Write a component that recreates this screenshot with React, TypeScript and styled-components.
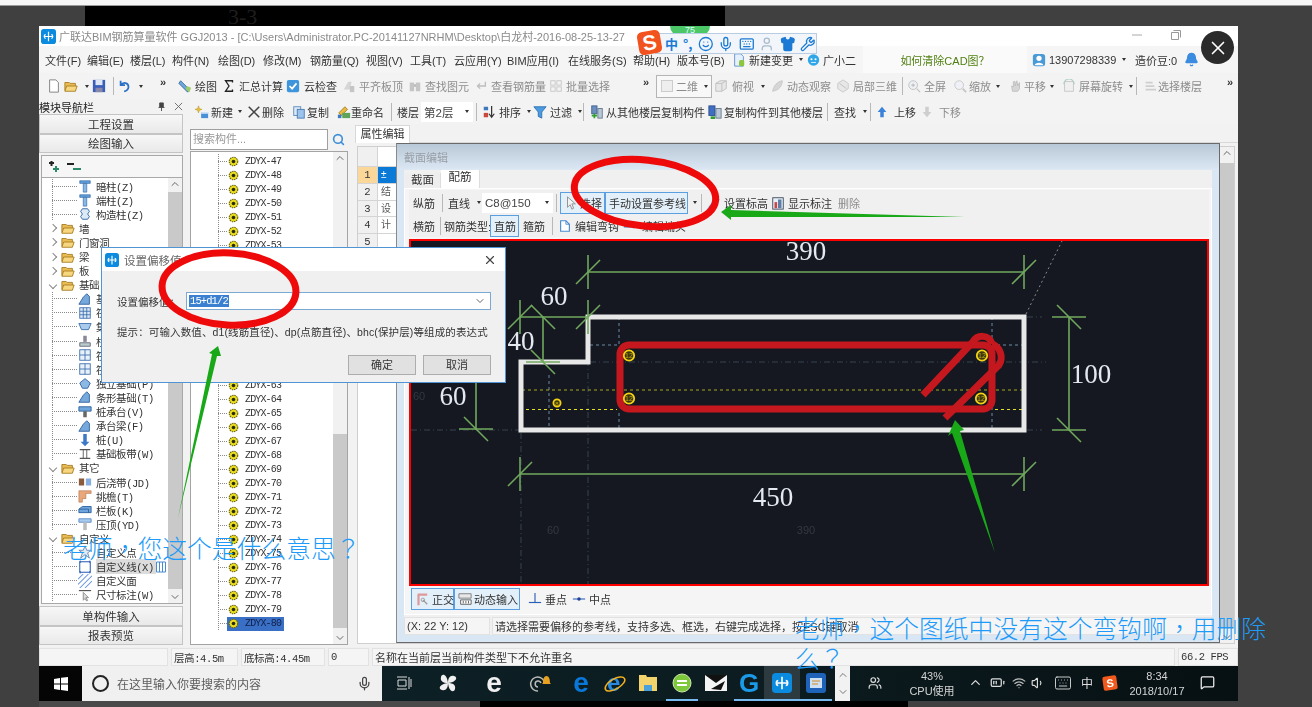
import React from "react";
import styled, { createGlobalStyle } from "styled-components";
import { Smile, Mic, Keyboard, Shirt, Wrench, User, Bell, MessageSquare, Users, ChevronUp, ChevronDown, X as XIcon, Search, Wifi, Volume1, BatteryMedium } from "lucide-react";

const GlobalStyle = createGlobalStyle`
  html, body {
    margin: 0;
    padding: 0;
    background: #404040;
  }
  * {
    box-sizing: border-box;
  }
`;

const sans = `"Liberation Sans", "Noto Sans CJK SC", sans-serif`;
const mono = `"Liberation Mono", "Noto Sans CJK SC", monospace`;

// Page frame
const Page = styled.div`
  position: relative;
  width: 1312px;
  height: 707px;
  overflow: hidden;
  background: #404040;
  display: flex;
  flex-direction: column;
  font: 11px ${sans};
  color: #333;
`;

const TopWhite = styled.div`
  height: 6px;
  background: #f6f6f6;
  border-bottom: 1px solid #9a9a9a;
`;

const TopBand = styled.div`
  height: 20px;
  padding-left: 85px;
`;

const BlackBar = styled.div`
  width: 640px;
  height: 100%;
  background: #000;
  color: #1e1e1e;
  font: 22px "Liberation Serif", serif;
  padding-left: 143px;
  line-height: 22px;
`;

const BottomBand = styled.div`
  height: 6px;
  display: flex;
`;

const BottomPart = styled.div<{ $w: number; $bg: string }>`
  width: ${({ $w }) => $w}px;
  background: ${({ $bg }) => $bg};
`;

// Main application window
const Window = styled.div`
  position: relative;
  margin-left: 39px;
  width: 1199px;
  height: 675px;
  background: #f2f2f2;
  display: flex;
  flex-direction: column;
  filter: blur(0.5px);
`;

const TitleBar = styled.div`
  height: 20px;
  background: #fff;
  display: flex;
  align-items: center;
  padding-left: 2px;
  gap: 3px;
  color: #8a8a8a;
  font-size: 11px;
  white-space: nowrap;
`;

const WinControl = styled.div<{ $x: number }>`
  position: absolute;
  left: ${({ $x }) => $x}px;
  top: 4px;
  width: 10px;
  height: 10px;
  color: #aaa;
`;

const MenuBar = styled.div`
  height: 27px;
  background: #f5f5f5;
  display: flex;
  align-items: center;
  padding-left: 6px;
  white-space: nowrap;
`;

const MenuItem = styled.div<{ $w: number }>`
  width: ${({ $w }) => $w}px;
  display: flex;
  align-items: center;
  gap: 3px;
  flex: none;
`;

const HelpTab = styled.div`
  width: 164px;
  height: 27px;
  margin: 0 5px 0 7px;
  background: #fafafa;
  color: #4f7f10;
  display: flex;
  align-items: center;
  justify-content: center;
  font-size: 11px;
  flex: none;
`;

const Caret = styled.span`
  display: inline-block;
  width: 0;
  height: 0;
  border: 2.5px solid transparent;
  border-top: 3px solid #333;
  border-bottom: 0;
  margin-left: 3px;
  flex: none;
`;

const ToolRow = styled.div<{ $h: number; $bg?: string }>`
  height: ${({ $h }) => $h}px;
  background: ${({ $bg }) => $bg || "#f3f3f3"};
  display: flex;
  align-items: center;
  white-space: nowrap;
  flex: none;
`;

const Tool = styled.div<{ $w: number; $dim?: boolean; $on?: boolean; $gap?: number }>`
  width: ${({ $w }) => $w}px;
  height: ${({ $on }) => ($on ? "22px" : "auto")};
  display: flex;
  align-items: center;
  gap: ${({ $gap }) => $gap ?? 4}px;
  flex: none;
  padding-left: ${({ $on }) => ($on ? "3px" : "2px")};
  color: ${({ $dim }) => ($dim ? "#8c8c8c" : "#333")};
  background: ${({ $on }) => ($on ? "#e3eff9" : "transparent")};
  border: ${({ $on }) => ($on ? "1.5px solid #5a9fe0" : "0")};
  svg {
    opacity: ${({ $dim }) => ($dim ? 0.5 : 1)};
    flex: none;
  }
`;

const Sep = styled.div<{ $w: number }>`
  width: ${({ $w }) => $w}px;
  height: 18px;
  flex: none;
  background: linear-gradient(#b8b8b8, #b8b8b8) center/1px 100% no-repeat;
`;

const More = styled.div<{ $w: number }>`
  width: ${({ $w }) => $w}px;
  flex: none;
  text-align: center;
  font-size: 11px;
  font-weight: bold;
  margin-top: -8px;
`;

const ModeBox = styled.div`
  width: 56px;
  height: 23px;
  flex: none;
  border: 1.5px solid #b4b4b4;
  background: #f8f8f8;
  color: #8c8c8c;
  display: flex;
  align-items: center;
  padding-left: 4px;
  gap: 3px;
  margin-left: 1px;
`;

// Work area below the toolbars
const Workspace = styled.div`
  flex: 1;
  min-height: 0;
  display: flex;
`;

const NavPanel = styled.div`
  width: 147px;
  flex: none;
  display: flex;
  flex-direction: column;
  padding-bottom: 2px;
`;

const NavTitle = styled.div`
  height: 15px;
  display: flex;
  align-items: center;
  justify-content: space-between;
  padding-right: 3px;
  font-size: 11px;
  color: #222;
`;

const NavTitleTools = styled.span`
  display: flex;
  gap: 8px;
`;

const NavButton = styled.div`
  height: 19.5px;
  flex: none;
  border: 1px solid #c4c4c4;
  background: linear-gradient(#f7f7f7, #e9e9e9);
  display: flex;
  align-items: center;
  justify-content: center;
  font-size: 11.5px;
  color: #333;
  width: 144px;
`;

const TreeBox = styled.div`
  flex: 1;
  min-height: 0;
  width: 142px;
  margin: 2px 0 2px 2px;
  border: 1px solid #a8a8a8;
  background: #fff;
  display: flex;
  flex-direction: column;
`;

const TreeTools = styled.div`
  height: 22px;
  flex: none;
  background: #f6f6f6;
  border-bottom: 1px solid #a8a8a8;
  display: flex;
  align-items: center;
  gap: 5px;
  padding-left: 3px;
`;

const TreeScrollArea = styled.div`
  flex: 1;
  min-height: 0;
  display: flex;
  overflow: hidden;
`;

const TreeBody = styled.div`
  flex: 1;
  min-width: 0;
  padding-top: 1px;
`;

const Scrollbar = styled.div<{ $w: number; $top: number; $bottom: number }>`
  width: ${({ $w }) => $w}px;
  flex: none;
  display: flex;
  flex-direction: column;
  align-items: center;
  justify-content: space-between;
  color: #666;
  background:
    linear-gradient(#c9c9c9, #c9c9c9) 0 ${({ $top }) => $top}px /
      100% calc(100% - ${({ $top, $bottom }) => $top + $bottom}px) no-repeat,
    #f1f1f1;
`;

const NavRow = styled.div<{ $leaf?: boolean }>`
  height: 14.1px;
  display: flex;
  align-items: center;
  white-space: nowrap;
  padding-left: ${({ $leaf }) => ($leaf ? "10px" : "7px")};
  font: 10.5px ${mono};
  letter-spacing: -0.45px;
  color: #333;
  svg {
    flex: none;
  }
`;

const Guide = styled.span<{ $w: number }>`
  width: ${({ $w }) => $w}px;
  height: 100%;
  flex: none;
  background:
    repeating-linear-gradient(180deg, #8a8a8a 0 1px, transparent 1px 2px) 0 0 / 1px 100% no-repeat,
    repeating-linear-gradient(90deg, #8a8a8a 0 1px, transparent 1px 2px) 0 50% / 100% 1px no-repeat;
`;

const NavLabel = styled.span<{ $sel?: boolean }>`
  margin-left: 4px;
  padding-right: 2px;
  background: ${({ $sel }) => ($sel ? "#dcdcdc" : "transparent")};
`;

const Chevron = styled.span<{ $open?: boolean }>`
  width: 6px;
  height: 6px;
  flex: none;
  border-right: 1px solid #888;
  border-bottom: 1px solid #888;
  transform: rotate(${({ $open }) => ($open ? "45deg" : "-45deg")});
  margin: 0 5px 0 1px;
`;

const CenterColumn = styled.div`
  flex: 1;
  min-width: 0;
  margin-left: 4px;
  display: flex;
  flex-direction: column;
`;

const ContentRow = styled.div`
  flex: 1;
  min-height: 0;
  display: flex;
`;

const ListPanel = styled.div`
  width: 160px;
  flex: none;
  display: flex;
  flex-direction: column;
  padding-top: 5px;
`;

const SearchRow = styled.div`
  height: 21px;
  display: flex;
  flex: none;
`;

const SearchInput = styled.div`
  width: 138px;
  background: #fff;
  border: 1.5px solid #a0a0a0;
  color: #999;
  padding-left: 2px;
  line-height: 18px;
  font-size: 11px;
`;

const SearchBtn = styled.div`
  width: 20px;
  display: flex;
  align-items: center;
  justify-content: center;
  color: #3f8fd8;
`;

const ListBox = styled.div`
  flex: 1;
  min-height: 0;
  margin: 1px 2px 2px 0;
  border: 1.5px solid #a4a4a4;
  background: #fff;
  display: flex;
  overflow: hidden;
`;

const ListBody = styled.div`
  flex: 1;
  min-width: 0;
  padding: 2px 0 0 27px;
`;

const ListRow = styled.div`
  height: 14.03px;
  display: flex;
  align-items: center;
`;

const ListText = styled.span<{ $sel?: boolean }>`
  display: flex;
  align-items: center;
  gap: 6px;
  padding: 0 3px 0 1px;
  height: 100%;
  font: 10px ${mono};
  letter-spacing: -0.85px;
  background: ${({ $sel }) => ($sel ? "#3a6fc6" : "transparent")};
  color: ${({ $sel }) => ($sel ? "#10204a" : "#333")};
  svg {
    flex: none;
  }
`;

const PropsPanel = styled.div`
  flex: 1;
  min-width: 0;
  margin-left: 5px;
  display: flex;
  flex-direction: column;
`;

const PropsTabs = styled.div`
  height: 19px;
  flex: none;
  padding-top: 1px;
  border-bottom: 1px solid #d8d8d8;
`;

const PropsTab = styled.div`
  width: 55px;
  height: 18px;
  background: #fff;
  border: 1px solid #d8d8d8;
  border-bottom: 0;
  text-align: center;
  line-height: 17px;
  font-size: 11px;
`;

const PropsBody = styled.div`
  flex: 1;
  min-height: 0;
  margin: 3px 3px 3px 2px;
  background: #fff;
  border: 1px solid #cfcfcf;
  display: flex;
  justify-content: space-between;
`;

const Grid = styled.div`
  width: 39px;
`;

const GridRow = styled.div<{ $h: number }>`
  height: ${({ $h }) => $h}px;
  display: flex;
  border-bottom: 1px solid #d4d4d4;
`;

const GridNum = styled.div<{ $on?: boolean }>`
  width: 20px;
  text-align: center;
  font: 10.5px ${mono};
  line-height: 16px;
  background: ${({ $on }) => ($on ? "#fbd79a" : "#f0f0f0")};
  border-right: 1px solid #d4d4d4;
`;

const GridCell = styled.div<{ $on?: boolean }>`
  flex: 1;
  padding-left: 3px;
  font-size: 10px;
  line-height: 16px;
  background: ${({ $on }) => ($on ? "#0b7ad6" : "transparent")};
  color: ${({ $on }) => ($on ? "#fff" : "#555")};
`;

// Section editor window, sits over the property panel
const SectionDialog = styled.div`
  position: absolute;
  left: 357px;
  top: 117px;
  width: 824px;
  height: 500px;
  background: #d9e6f3;
  border: 1px solid #6a6a6a;
  border-left-color: #8a8a8a;
  padding: 0 7px 7px;
  display: flex;
  flex-direction: column;
`;

const SectionTitle = styled.div`
  height: 26px;
  flex: none;
  margin: 0 -7px;
  padding-left: 7px;
  background: linear-gradient(#b9c8d7, #dce8f4);
  color: #979ea6;
  display: flex;
  align-items: center;
  font-size: 11px;
`;

const SectionBody = styled.div`
  flex: 1;
  min-height: 0;
  background: #f0f0f0;
  display: flex;
  flex-direction: column;
`;

const SectionTabs = styled.div`
  height: 18px;
  flex: none;
  display: flex;
  padding-left: 1px;
  align-items: flex-end;
`;

const SectionTab = styled.div<{ $on?: boolean; $w: number }>`
  width: ${({ $w }) => $w}px;
  height: ${({ $on }) => ($on ? 18 : 15)}px;
  background: ${({ $on }) => ($on ? "#fff" : "#eee")};
  text-align: center;
  font-size: 11.5px;
  line-height: 15px;
  border-right: 1px solid #ddd;
`;

const SectionPanel = styled.div`
  width: 808px;
  height: 427px;
  flex: none;
  background: #f5f5f5;
  border: 1px solid #fff;
  padding: 1px 2px 0 4px;
`;

const RowInput = styled.div<{ $w: number }>`
  width: ${({ $w }) => $w}px;
  height: 20px;
  background: #fff;
  display: flex;
  align-items: center;
  justify-content: space-between;
  padding: 0 4px 0 3px;
  flex: none;
  font-size: 11.5px;
  color: #444;
`;

const Canvas = styled.div`
  height: 347px;
  margin-top: 2px;
  width: 800px;
  border: 2px solid #f00;
  background: #151820;
  svg {
    display: block;
  }
`;

const SectionStatus = styled.div`
  flex: 1;
  margin-top: 2px;
  display: flex;
  gap: 2px;
  font-size: 11px;
  white-space: nowrap;
  align-items: stretch;
`;

const StatusCell = styled.div<{ $w?: number; $mono?: boolean }>`
  ${({ $w }) => ($w ? `width: ${$w}px; flex: none;` : "flex: 1; min-width: 0;")}
  background: #f5f5f5;
  border: 1px solid #e2e2e2;
  display: flex;
  align-items: center;
  padding-left: 2px;
  overflow: hidden;
  white-space: nowrap;
  font-family: ${({ $mono }) => ($mono ? mono : sans)};
  font-size: ${({ $mono }) => ($mono ? "10.5px" : "11px")};
  letter-spacing: ${({ $mono }) => ($mono ? "-0.4px" : "0")};
`;

const StatusBar = styled.div`
  height: 19px;
  flex: none;
  display: flex;
  gap: 3px;
  background: #f0f0f0;
  padding-top: 1px;
`;

// Offset value dialog
const OffsetDialog = styled.div`
  position: absolute;
  left: 62px;
  top: 221px;
  width: 405px;
  height: 136px;
  background: #f0f0f0;
  border: 1px solid #4f94d4;
  display: flex;
  flex-direction: column;
`;

const OffsetTitle = styled.div`
  height: 23px;
  flex: none;
  background: #fff;
  color: #666;
  display: flex;
  align-items: center;
  gap: 5px;
  padding: 0 8px 0 3px;
  font-size: 11.5px;
`;

const OffsetClose = styled.div`
  margin-left: auto;
  color: #444;
  display: flex;
`;

const OffsetRow = styled.div`
  display: flex;
  align-items: center;
  margin: 21px 0 0 15px;
  font: 10.5px ${mono};
`;

const OffsetInput = styled.div`
  width: 305px;
  height: 18px;
  margin-left: 6px;
  background: #fff;
  border: 1px solid #7aa9d4;
  display: flex;
  align-items: center;
  justify-content: space-between;
  padding: 0 4px 0 2px;
`;

const Selected = styled.span`
  background: #3b80d0;
  color: #fff;
  font: 10.5px ${mono};
  letter-spacing: -0.9px;
  padding: 0 1px;
`;

const OffsetHint = styled.div`
  margin: 14px 0 0 15px;
  font: 10.5px ${sans};
  white-space: nowrap;
  letter-spacing: 0.12px;
`;

const OffsetButtons = styled.div`
  display: flex;
  justify-content: flex-end;
  gap: 7px;
  margin: 16px 14px 0 0;
`;

const OffsetBtn = styled.div`
  width: 68px;
  height: 20px;
  background: #e1e1e1;
  border: 1px solid #adadad;
  text-align: center;
  line-height: 18px;
  font-size: 11px;
`;

// Windows taskbar
const Taskbar = styled.div`
  height: 35px;
  flex: none;
  background: linear-gradient(90deg, #0d2329, #0c1c20 60%, #071013);
  display: flex;
  align-items: stretch;
  color: #e0e0e0;
  position: relative;
`;

const StartButton = styled.div`
  width: 43px;
  flex: none;
  background: #050505;
  display: flex;
  align-items: center;
  justify-content: center;
`;

const TaskSearch = styled.div`
  width: 300px;
  flex: none;
  background: #f0f0f0;
  color: #5c5c5c;
  display: flex;
  align-items: center;
  font-size: 12px;
  padding: 0 10px;
  gap: 8px;
`;

const MicSlot = styled.span`
  margin-left: auto;
  display: flex;
`;

const SearchRing = styled.span`
  width: 17px;
  height: 17px;
  flex: none;
  border-radius: 50%;
  border: 2.5px solid #222;
`;

const TaskIcon = styled.div<{ $w: number; $on?: boolean; $line?: boolean }>`
  width: ${({ $w }) => $w}px;
  flex: none;
  display: flex;
  align-items: center;
  justify-content: center;
  background: ${({ $on }) => ($on ? "#2d3a40" : "transparent")};
  border-bottom: 2px solid ${({ $line }) => ($line ? "#76b9ed" : "transparent")};
`;

const TaskLetter = styled.span<{ $c: string; $size?: number }>`
  color: ${({ $c }) => $c};
  font: bold ${({ $size }) => $size || 28}px/30px "Liberation Sans", sans-serif;
`;

const TaskScroll = styled.div`
  width: 15px;
  flex: none;
  margin: 0 0 0 3px;
  background: #f2f2f2;
  color: #777;
  display: flex;
  flex-direction: column;
  align-items: center;
  justify-content: space-around;
`;

const CpuBlock = styled.div<{ $w: number }>`
  width: ${({ $w }) => $w}px;
  flex: none;
  display: flex;
  flex-direction: column;
  align-items: center;
  justify-content: center;
  font-size: 11px;
  line-height: 15px;
  color: #d4d4d4;
`;

const ImeChar = styled.span`
  font-size: 12px;
  color: #ddd;
`;

const SmallLogo = styled.span`
  width: 14px;
  height: 14px;
  display: flex;
  align-items: center;
  justify-content: center;
  background: #f2591d;
  color: #fff;
  font: bold 11px "Liberation Sans", sans-serif;
  border-radius: 2px;
  transform: rotate(-8deg);
`;

// Things pasted on top of the screenshot
const Markup = styled.svg`
  position: absolute;
  left: 0;
  top: 0;
  pointer-events: none;
`;

const Note = styled.div<{ $x: number; $y: number }>`
  position: absolute;
  left: ${({ $x }) => $x}px;
  top: ${({ $y }) => $y}px;
  color: #1e9bf8;
  font: 24.8px/30px "Noto Sans CJK TC", sans-serif;
  font-weight: 300;
  white-space: nowrap;
`;

const CloseCircle = styled.div`
  position: absolute;
  left: 1201px;
  top: 31px;
  width: 33px;
  height: 33px;
  border-radius: 50%;
  background: #2b2b2b;
  color: #fff;
  display: flex;
  align-items: center;
  justify-content: center;
`;

const GreenBadge = styled.div`
  position: absolute;
  left: 670px;
  top: 26px;
  width: 40px;
  height: 10px;
  background: #4cc767;
  color: #dff;
  font-size: 9px;
  line-height: 9px;
  text-align: center;
  border-radius: 0 0 14px 14px;
`;

const SogouLogo = styled.div`
  position: absolute;
  left: 638px;
  top: 31px;
  width: 23px;
  height: 23px;
  background: #f2521e;
  color: #fff;
  border-radius: 5px;
  transform: rotate(-10deg);
  font: bold 21px/23px "Liberation Sans", sans-serif;
  text-align: center;
  z-index: 1;
`;

const SogouBar = styled.div`
  position: absolute;
  left: 655px;
  top: 33px;
  width: 162px;
  height: 21px;
  background: #f2f6fb;
  border: 1px solid #b8cde2;
  display: flex;
  align-items: center;
  padding-left: 9px;
  gap: 5px;
  color: #1a7ad4;
  font: bold 13px "Noto Sans CJK SC", sans-serif;
`;

// Icons
const Svg: React.FC<{ s?: number; children: React.ReactNode }> = ({ s = 14, children }) => (
  <svg width={s} height={s} viewBox="0 0 16 16">
    {children}
  </svg>
);

const Ico: Record<string, React.ReactNode> = {
  doc: <path d="M3 1h7l3 3v11H3z" fill="#fff" stroke="#777" />,
  folder: (
    <>
      <path d="M1 4h5l1 1h6v8H1z" fill="#e9bb52" stroke="#a67c20" />
      <path d="M3 8h12l-2 6H1z" fill="#f6d67e" stroke="#a67c20" />
    </>
  ),
  save: (
    <>
      <rect x="1" y="1" width="14" height="14" fill="#3b5fb8" />
      <rect x="4" y="1" width="8" height="6" fill="#dfe7f7" />
      <rect x="4" y="10" width="8" height="5" fill="#88a" />
    </>
  ),
  undo: <path d="M3 2v5h5M3 7c3-4 9-3 9 2 0 3-3 5-5 5" fill="none" stroke="#2a6fc8" strokeWidth="2" />,
  wand: (
    <>
      <path d="M3 2l10 10-2 3L1 5z" fill="#6fa8dc" stroke="#38689c" />
      <path d="M10 8l5 2-2 5-4-3z" fill="#9ccc65" />
    </>
  ),
  sigma: <path d="M12 4V2H4l4 6-4 6h8v-2" fill="none" stroke="#222" strokeWidth="1.5" />,
  cloud: (
    <>
      <rect x="1" y="1" width="14" height="14" rx="2" fill="#3e95dc" />
      <path d="M4 8l3 3 5-6" fill="none" stroke="#fff" strokeWidth="2" />
    </>
  ),
  slab: (
    <>
      <path d="M2 12l5-9h4l-2 9z" fill="#bbb" />
      <rect x="9" y="8" width="5" height="7" fill="#999" />
    </>
  ),
  binoc: (
    <>
      <rect x="2" y="4" width="5" height="10" fill="#999" />
      <rect x="9" y="4" width="5" height="10" fill="#999" />
      <rect x="7" y="6" width="2" height="3" fill="#777" />
    </>
  ),
  hook: <path d="M13 3v5H4M7 5L4 8l3 3" fill="none" stroke="#888" strokeWidth="1.5" />,
  batch: (
    <>
      <rect x="2" y="2" width="5" height="5" fill="none" stroke="#999" />
      <rect x="9" y="2" width="5" height="5" fill="none" stroke="#999" />
      <rect x="2" y="9" width="5" height="5" fill="none" stroke="#999" />
      <rect x="9" y="9" width="5" height="5" fill="none" stroke="#999" />
    </>
  ),
  cube: <path d="M2 5l5-3h7v9l-5 3H2zM2 5h7v9M9 5l5-3" fill="#ddd" stroke="#888" />,
  orbit: <path d="M3 14C4 8 8 3 14 2c0 6-4 11-11 12z" fill="#bbb" stroke="#999" />,
  part: (
    <>
      <path d="M8 1l6 4v6l-6 4-6-4V5z" fill="#ddd" stroke="#999" />
      <path d="M4 5l8 6" stroke="#888" />
    </>
  ),
  zoom: (
    <>
      <circle cx="7" cy="7" r="5" fill="#e8f0f8" stroke="#888" />
      <path d="M11 11l4 4M5 7h4M7 5v4" stroke="#888" strokeWidth="1.2" />
    </>
  ),
  zoomOut: (
    <>
      <circle cx="7" cy="7" r="5" fill="#eef" stroke="#999" />
      <path d="M11 11l4 4" stroke="#999" strokeWidth="2" />
    </>
  ),
  hand: <path d="M4 14L3 8l2 1V3l2 0 0 5 2-6 1 6 2-4v7l-2 3z" fill="#bbb" stroke="#888" />,
  rotate: (
    <>
      <rect x="3" y="3" width="10" height="11" fill="#eee" stroke="#999" />
      <path d="M2 6a6 6 0 0 1 12 0" fill="none" stroke="#6a9" strokeWidth="1.2" />
    </>
  ),
  floors: <path d="M3 3h8v2H3zM3 7h10v2H3zM3 11h12v2H3z" fill="#aaa" />,
  newItem: (
    <>
      <path d="M4 1l1 3 3 1-3 1-1 3-1-3-3-1 3-1z" fill="#e9c23a" stroke="#b08a10" strokeWidth=".5" />
      <rect x="7" y="8" width="8" height="7" fill="#4a90d8" />
      <rect x="7" y="8" width="8" height="2" fill="#cfe3f7" />
    </>
  ),
  cross: <path d="M2 2l12 12M14 2L2 14" stroke="#444" strokeWidth="1.8" />,
  copy: (
    <>
      <rect x="2" y="2" width="8" height="10" fill="#dce9f7" stroke="#5a87b8" />
      <rect x="6" y="5" width="8" height="10" fill="#9cc3ec" stroke="#4878b0" />
    </>
  ),
  rename: (
    <>
      <path d="M2 9l7-7 3 3-7 7z" fill="#e6b93f" stroke="#a67c20" />
      <rect x="6" y="9" width="9" height="6" fill="#5da35a" />
      <rect x="1" y="11" width="4" height="4" fill="#3e78bd" />
    </>
  ),
  sort: (
    <>
      <path d="M2 2h5v4H2z" fill="#3e78bd" />
      <path d="M2 9h5v5H2z" fill="#c94a3a" />
      <path d="M11 1v12M8 10l3 4 3-4" fill="none" stroke="#333" strokeWidth="1.4" />
    </>
  ),
  funnel: <path d="M1 2h14l-5 6v7l-4-2V8z" fill="#4a9be0" stroke="#2f6fb0" />,
  fromFloor: (
    <>
      <rect x="2" y="1" width="6" height="9" fill="#6c8fc0" stroke="#3c5f90" />
      <rect x="9" y="4" width="5" height="11" fill="#b8c8d8" stroke="#678" />
      <path d="M2 12h6M5 10v5" stroke="#2fa02f" strokeWidth="2" />
    </>
  ),
  toFloor: (
    <>
      <rect x="1" y="1" width="7" height="11" fill="#3f6fc0" stroke="#2c4f90" />
      <rect x="9" y="4" width="6" height="11" fill="#b8c8d8" stroke="#678" />
      <path d="M3 13h5v3H3z" fill="#2fa02f" />
    </>
  ),
  up: <path d="M8 2l5 6h-3v6H6V8H3z" fill="#3b82d8" />,
  down: <path d="M8 14l5-6h-3V2H6v6H3z" fill="#aaa" />,
  cursor: <path d="M4 1v12l3-3 2 5 2-1-2-5h4z" fill="#f2f2f2" stroke="#888" />,
  level: (
    <>
      <path d="M3 13L12 2l3 2-9 11z" fill="#e8f1fb" stroke="#3a7fc8" />
      <path d="M1 15h6" stroke="#3a7fc8" />
    </>
  ),
  mark: (
    <>
      <rect x="2" y="2" width="12" height="13" fill="#e8eef6" stroke="#345" />
      <rect x="4" y="7" width="3" height="7" fill="#c44" />
      <rect x="8" y="4" width="4" height="10" fill="#5c7fa8" />
    </>
  ),
  bend: (
    <>
      <path d="M3 2h6l4 4v8H3z" fill="#fff" stroke="#4a8ad0" strokeWidth="1.3" />
      <path d="M9 2v4h4" fill="none" stroke="#4a8ad0" />
    </>
  ),
  endLine: (
    <>
      <path d="M1 9h14" stroke="#2a5fb8" strokeWidth="1.3" />
      <circle cx="12" cy="9" r="1.6" fill="#2a3fa8" />
    </>
  ),
  ortho: (
    <>
      <path d="M3 3h11M4 3v12" stroke="#d99" strokeWidth="2.5" fill="none" />
      <path d="M9 9l5 5" stroke="#999" strokeWidth="1.4" />
      <circle cx="9" cy="9" r="2" fill="none" stroke="#999" />
    </>
  ),
  dynInput: (
    <>
      <path d="M1 2h14v5H1z" fill="#e8e8e8" stroke="#777" />
      <path d="M3 9h12v5H3z" fill="#fff" stroke="#555" />
      <path d="M6 10v3M9 10v3M12 10v3" stroke="#555" />
    </>
  ),
  foot: (
    <>
      <path d="M8 1v11" stroke="#2a5fb8" strokeWidth="1.3" />
      <path d="M1 12h14" stroke="#2a5fb8" strokeWidth="1.3" />
    </>
  ),
  mid: (
    <>
      <path d="M1 8h14" stroke="#2a5fb8" strokeWidth="1.2" />
      <circle cx="8" cy="8" r="2" fill="#1f3f98" />
    </>
  ),
  android: (
    <>
      <path d="M3 1h7l3 3v11H3z" fill="#e6f0fb" stroke="#5a90cc" />
      <rect x="8" y="8" width="6" height="7" rx="2" fill="#8cc63f" />
    </>
  ),
  assistant: (
    <>
      <circle cx="8" cy="8" r="7" fill="#2fa6e8" />
      <circle cx="5.5" cy="7" r="1.3" fill="#fff" />
      <circle cx="10.5" cy="7" r="1.3" fill="#fff" />
      <path d="M5 11h6" stroke="#fff" />
    </>
  ),
  avatar: (
    <>
      <rect x="1" y="1" width="14" height="14" rx="3" fill="#4a9ad8" />
      <circle cx="8" cy="6" r="3" fill="#fff" />
      <path d="M3 14c0-4 10-4 10 0z" fill="#fff" />
    </>
  ),
  pillar: (
    <>
      <path d="M2 2h12v3H2z" fill="#5f9fdc" stroke="#2c5f9c" strokeWidth=".7" />
      <path d="M6 5h4v10H6z" fill="#86b8e8" stroke="#2c5f9c" strokeWidth=".7" />
    </>
  ),
  knot: <path d="M5 2h6l2 3-2 3 2 3-2 3H5l-2-3 2-3-2-3z" fill="#dce9f7" stroke="#2c5f9c" />,
  slope: <path d="M1 14l5-8 4-4 3 3v9z" fill="#76a8dc" stroke="#2c5f9c" />,
  mesh: (
    <>
      <rect x="2" y="2" width="12" height="12" fill="#dce9f7" stroke="#3c6fac" />
      <path d="M2 6h12M2 10h12M6 2v12M10 2v12" stroke="#3c6fac" />
    </>
  ),
  pit: <path d="M1 4h14l-3 7H4z" fill="#a8cbee" stroke="#3c6fac" />,
  pier: (
    <>
      <path d="M6 2h4v7H6z" fill="#889" />
      <path d="M2 10h12v4H2z" fill="#bcc" stroke="#667" />
    </>
  ),
  panel: (
    <>
      <rect x="2" y="2" width="12" height="12" fill="#e8f1fb" stroke="#3c6fac" />
      <path d="M2 8h12M8 2v12" stroke="#3c6fac" />
    </>
  ),
  base: <path d="M2 8l6-5 6 5-3 6H5z" fill="#8cb8e4" stroke="#2c5f9c" />,
  cap: (
    <>
      <path d="M1 2h14v5H1z" fill="#6fa5dc" stroke="#2c5f9c" />
      <path d="M6 7h4v7H6z" fill="#666" />
    </>
  ),
  pile: <path d="M6 1h4v9h3l-5 5-5-5h3z" fill="#3c78c8" />,
  strip: (
    <>
      <path d="M2 3h12M2 13h12" stroke="#555" strokeWidth="1.5" />
      <path d="M6 3v10M10 3v10" stroke="#555" />
    </>
  ),
  joint: (
    <>
      <rect x="1" y="4" width="6" height="8" fill="#8a5a3c" />
      <rect x="9" y="4" width="6" height="8" fill="#88aee0" />
    </>
  ),
  eave: <path d="M1 2h14v3H9v6H5v4H1z" fill="#e8a87c" stroke="#a8683c" strokeWidth=".6" />,
  rail: <path d="M1 7l4-3h10v7H1zM1 7h11v4" fill="#6fa5dc" stroke="#2c5f9c" />,
  coping: (
    <>
      <path d="M1 2h14v4H1z" fill="#a8cbee" stroke="#5c8cc8" />
      <path d="M6 6h4v9H6z" fill="#bbb" />
    </>
  ),
  point: <path d="M8 1l2 5h5l-4 3 2 6-5-4-5 4 2-6-4-3h5z" fill="#dce9f7" stroke="#6688aa" />,
  line: (
    <>
      <rect x="2" y="2" width="12" height="12" fill="none" stroke="#2c5fb8" strokeWidth="1.2" />
      <path d="M2 2h1M14 2h-1M2 14h1M14 14h-1" stroke="#2c5fb8" strokeWidth="3" />
    </>
  ),
  face: (
    <>
      <rect x="1" y="1" width="14" height="14" fill="#fff" />
      <path d="M0 6L6 0M0 12L12 0M2 16L16 2M8 16l8-8" stroke="#6a96e0" strokeWidth="1.2" />
    </>
  ),
  dim: (
    <>
      <path d="M1 3h14" stroke="#444" strokeWidth="1.2" />
      <path d="M6 5v9l2-2 2 3 1-1-2-3h3z" fill="#ddd" stroke="#888" />
    </>
  ),
};

const I: React.FC<{ n: string; s?: number }> = ({ n, s }) => <Svg s={s}>{Ico[n]}</Svg>;

const AppLogo: React.FC<{ s?: number }> = ({ s = 15 }) => (
  <svg width={s} height={s} viewBox="0 0 16 16">
    <rect width="16" height="16" rx="3" fill="#0a8be0" />
    <path d="M8 3v10M3 8h10M5 6c-2 0-2 4 0 4M11 6c2 0 2 4 0 4" fill="none" stroke="#fff" strokeWidth="1.3" />
  </svg>
);

const Gear: React.FC = () => (
  <svg width="11" height="11" viewBox="0 0 16 16">
    <circle cx="8" cy="8" r="6.2" fill="#e8dc1e" stroke="#6b6410" strokeWidth="1.6" strokeDasharray="2.2 1.1" />
    <circle cx="8" cy="8" r="2.6" fill="#28280a" />
  </svg>
);

type ToolDef = { w: number; icon?: string; label?: string; caret?: boolean; dim?: boolean; on?: boolean; sep?: boolean; more?: boolean; gap?: number };

const mainTools: ToolDef[] = [
  { w: 17, icon: "doc" },
  { w: 28, icon: "folder", caret: true },
  { w: 20, icon: "save" },
  { w: 6, sep: true },
  { w: 34, icon: "undo", caret: true },
  { w: 26, more: true },
  { w: 44, icon: "wand", label: "绘图", gap: 3 },
  { w: 64, icon: "sigma", label: "汇总计算", gap: 3 },
  { w: 56, icon: "cloud", label: "云检查" },
  { w: 66, icon: "slab", label: "平齐板顶", dim: true, gap: 3 },
  { w: 66, icon: "binoc", label: "查找图元", dim: true, gap: 3 },
  { w: 75, icon: "hook", label: "查看钢筋量", dim: true, gap: 3 },
  { w: 90, icon: "batch", label: "批量选择", dim: true, gap: 3 },
  { w: 18, more: true },
];

const viewTools: ToolDef[] = [
  { w: 56, icon: "cube", label: "俯视", dim: true, caret: true },
  { w: 66, icon: "orbit", label: "动态观察", dim: true, gap: 3 },
  { w: 66, icon: "part", label: "局部三维", dim: true, gap: 3 },
  { w: 5, sep: true },
  { w: 46, icon: "zoom", label: "全屏", dim: true, gap: 3 },
  { w: 56, icon: "zoomOut", label: "缩放", dim: true, caret: true, gap: 2 },
  { w: 53, icon: "hand", label: "平移", dim: true, caret: true, gap: 1 },
  { w: 71, icon: "rotate", label: "屏幕旋转", dim: true, caret: true, gap: 3 },
  { w: 10, sep: true },
  { w: 82, icon: "floors", label: "选择楼层", dim: true, gap: 1 },
  { w: 14, more: true },
];

const compTools: ToolDef[] = [
  { w: 3 },
  { w: 52, icon: "newItem", label: "新建", caret: true, gap: 2 },
  { w: 45, icon: "cross", label: "删除", gap: 1 },
  { w: 45, icon: "copy", label: "复制", gap: 1 },
  { w: 53, icon: "rename", label: "重命名", gap: 0 },
  { w: 7, sep: true },
  { w: 26, label: "楼层" },
];

const compTools2: ToolDef[] = [
  { w: 7, sep: true },
  { w: 51, icon: "sort", label: "排序", caret: true, gap: 3 },
  { w: 47, icon: "funnel", label: "过滤", caret: true, gap: 3 },
  { w: 10, sep: true },
  { w: 118, icon: "fromFloor", label: "从其他楼层复制构件", gap: 2 },
  { w: 117, icon: "toFloor", label: "复制构件到其他楼层", gap: 2 },
  { w: 9, sep: true },
  { w: 36, label: "查找", caret: true },
  { w: 5, sep: true },
  { w: 45, icon: "up", label: "上移", gap: 5 },
  { w: 45, icon: "down", label: "下移", dim: true, gap: 5 },
];

const barRow1: ToolDef[] = [
  { w: 2 },
  { w: 28, label: "纵筋" },
  { w: 7, sep: true },
  { w: 36, label: "直线", caret: true },
];

const barRow1b: ToolDef[] = [
  { w: 7, sep: true },
  { w: 45, icon: "cursor", label: "选择", on: true, gap: 2 },
  { w: 83, label: "手动设置参考线", on: true },
  { w: 10, label: "", caret: true },
  { w: 6, sep: true },
  { w: 65, icon: "level", label: "设置标高", gap: 4 },
  { w: 67, icon: "mark", label: "显示标注", gap: 3 },
  { w: 30, label: "删除", dim: true },
];

const barRow2: ToolDef[] = [
  { w: 2 },
  { w: 28, label: "横筋" },
  { w: 3, sep: true },
  { w: 48, label: "钢筋类型:" },
  { w: 29, label: "直筋", on: true },
  { w: 2 },
  { w: 28, label: "箍筋" },
  { w: 7, sep: true },
  { w: 65, icon: "bend", label: "编辑弯钩", gap: 3 },
  { w: 66, icon: "endLine", label: "编辑端头", gap: 5 },
];

const barRow3: ToolDef[] = [
  { w: 1 },
  { w: 43, icon: "ortho", label: "正交", on: true, gap: 3 },
  { w: 66, icon: "dynInput", label: "动态输入", on: true, gap: 2 },
  { w: 6 },
  { w: 44, icon: "foot", label: "垂点", gap: 3 },
  { w: 44, icon: "mid", label: "中点", gap: 3 },
];

const Tools: React.FC<{ items: ToolDef[] }> = ({ items }) => (
  <>
    {items.map((t, i) =>
      t.sep ? (
        <Sep key={i} $w={t.w} />
      ) : t.more ? (
        <More key={i} $w={t.w}>»</More>
      ) : (
        <Tool key={i} $w={t.w} $dim={t.dim} $on={t.on} $gap={t.gap}>
          {t.icon && <I n={t.icon} />}
          {t.label}
          {t.caret && <Caret />}
        </Tool>
      )
    )}
  </>
);

// Left navigation tree
type NavDef = { label: string; icon?: string; open?: boolean; folder?: boolean; sel?: boolean };

const navRows: NavDef[] = [
  { label: "暗柱(Z)", icon: "pillar" },
  { label: "端柱(Z)", icon: "pillar" },
  { label: "构造柱(Z)", icon: "knot" },
  { label: "墙", folder: true },
  { label: "门窗洞", folder: true },
  { label: "梁", folder: true },
  { label: "板", folder: true },
  { label: "基础", folder: true, open: true },
  { label: "基础梁(F)", icon: "slope" },
  { label: "筏板基础(M)", icon: "mesh" },
  { label: "集水坑(K)", icon: "pit" },
  { label: "柱墩(Y)", icon: "pier" },
  { label: "筏板主筋(R)", icon: "panel" },
  { label: "筏板负筋(X)", icon: "panel" },
  { label: "独立基础(P)", icon: "base" },
  { label: "条形基础(T)", icon: "slope" },
  { label: "桩承台(V)", icon: "cap" },
  { label: "承台梁(F)", icon: "slope" },
  { label: "桩(U)", icon: "pile" },
  { label: "基础板带(W)", icon: "strip" },
  { label: "其它", folder: true, open: true },
  { label: "后浇带(JD)", icon: "joint" },
  { label: "挑檐(T)", icon: "eave" },
  { label: "栏板(K)", icon: "rail" },
  { label: "压顶(YD)", icon: "coping" },
  { label: "自定义", folder: true, open: true },
  { label: "自定义点", icon: "point" },
  { label: "自定义线(X)", icon: "line", sel: true },
  { label: "自定义面", icon: "face" },
  { label: "尺寸标注(W)", icon: "dim" },
];

const zdyx = Array.from({ length: 34 }, (_, i) => `ZDYX-${47 + i}`);

const gridRows = [
  { n: "1", t: "±", on: true },
  { n: "2", t: "结" },
  { n: "3", t: "设" },
  { n: "4", t: "计" },
  { n: "5", t: "" },
];

const Tick: React.FC<{ x: number; y: number; v?: boolean; h?: boolean; back?: boolean }> = ({ x, y, v, h, back }) => (
  <g stroke="#70a85e" strokeWidth="1.6">
    {v && <line x1={x} y1={y - 17} x2={x} y2={y + 17} />}
    {h && <line x1={x - 17} y1={y} x2={x + 17} y2={y} />}
    {back ? (
      <line x1={x - 12} y1={y - 12} x2={x + 12} y2={y + 12} />
    ) : (
      <line x1={x - 12} y1={y + 12} x2={x + 12} y2={y - 12} />
    )}
  </g>
);

const Bar: React.FC<{ x: number; y: number; big?: boolean }> = ({ x, y, big }) => (
  <g>
    <circle cx={x} cy={y} r={big ? 5.2 : 3.6} fill="#3b3710" stroke="#f4d214" strokeWidth="1.8" />
    <text x={x} y={y + 2.5} fontSize={big ? 7 : 6} textAnchor="middle" fill="#c9ad14" fontFamily="Liberation Sans">
      {big ? "12" : "8"}
    </text>
  </g>
);

const CadLabel: React.FC<{ x: number; y: number; children: React.ReactNode; size?: number; faint?: boolean }> = ({ x, y, children, size = 27, faint }) => (
  <text
    x={x}
    y={y}
    fontSize={faint ? 11 : size}
    fill={faint ? "#333842" : "#e4e9f0"}
    fontFamily={faint ? "Liberation Sans" : "Liberation Serif"}
    textAnchor="middle"
  >
    {children}
  </text>
);

const SectionDrawing: React.FC = () => (
  <svg width="796" height="343" viewBox="411 242 796 343">
    <g fill="none">
      <g stroke="#36424c" strokeWidth="1" strokeDasharray="6 3 1 3">
        <path d="M590 363H1046M411 431H519M1027 318H1042M1027 431H1042" />
        <path d="M521 434V585M588 322V585" />
      </g>
      <g stroke="#6e8aa8" strokeWidth="1" strokeDasharray="3 3">
        <path d="M549 376V431M619 318V345M619 414V431M992 318V431M590 346H618M997 346H1026" />
      </g>
      <path d="M522 391H1024" stroke="#a8a820" strokeDasharray="3 3" />
      <path d="M520 410.5H617M995 410.5H1024" stroke="#e4e41e" strokeDasharray="3 3" />
      <path d="M1026 315L1062 242" stroke="#8a8a8a" strokeDasharray="2 3" />
      <path d="M588 318H1024V431H521V363H588Z" stroke="#e8e8e8" strokeWidth="5" />
      <g stroke="#c5171e" strokeWidth="7">
        <rect x="620" y="346" width="372" height="64" rx="9" />
        <path d="M923 396L972 344C977 335 989 335 992 345" />
        <path d="M945 419L999 366C1004 358 1000 348 992 345" />
      </g>
      <g stroke="#70a85e" strokeWidth="1.6">
        <path d="M588 273H1024M520 318H588M543 318V363M476 382V431M1069 318V431M520 475H1024" />
      </g>
    </g>
    <Tick x={588} y={273} v />
    <Tick x={1024} y={273} v />
    <Tick x={520} y={318} v />
    <Tick x={588} y={318} v />
    <Tick x={543} y={318} back />
    <Tick x={543} y={363} h back />
    <Tick x={476} y={430} h back />
    <Tick x={1069} y={318} h back />
    <Tick x={1069} y={431} h back />
    <Tick x={520} y={475} v />
    <Tick x={1024} y={475} v />
    <Bar x={629} y={356.5} big />
    <Bar x={982} y={356.5} big />
    <Bar x={629} y={399.5} big />
    <Bar x={981} y={399.5} big />
    <Bar x={557} y={404} />
    <CadLabel x={806} y={261}>390</CadLabel>
    <CadLabel x={554} y={306}>60</CadLabel>
    <CadLabel x={521} y={351}>40</CadLabel>
    <CadLabel x={453} y={406}>60</CadLabel>
    <CadLabel x={1091} y={384}>100</CadLabel>
    <CadLabel x={773} y={507}>450</CadLabel>
    <CadLabel x={419} y={401} faint>60</CadLabel>
    <CadLabel x={553} y={535} faint>60</CadLabel>
    <CadLabel x={806} y={535} faint>390</CadLabel>
  </svg>
);

const App: React.FC = () => (
  <>
    <GlobalStyle />
    <Page>
      <TopWhite />
      <TopBand>
        <BlackBar>3-3</BlackBar>
      </TopBand>

      <Window>
        <TitleBar>
          <AppLogo />
          广联达BIM钢筋算量软件 GGJ2013 - [C:\Users\Administrator.PC-20141127NRHM\Desktop\白龙村-2016-08-25-13-27
          <WinControl $x={1093}>
            <svg width="10" height="10" viewBox="0 0 10 10"><path d="M0 5h10" stroke="#aaa" /></svg>
          </WinControl>
          <WinControl $x={1132}>
            <svg width="10" height="10" viewBox="0 0 10 10"><path d="M2.5 .5h7v7M.5 2.5h7v7h-7z" fill="none" stroke="#999" /></svg>
          </WinControl>
        </TitleBar>

        <MenuBar>
          <MenuItem $w={42}>文件(F)</MenuItem>
          <MenuItem $w={43}>编辑(E)</MenuItem>
          <MenuItem $w={42}>楼层(L)</MenuItem>
          <MenuItem $w={46}>构件(N)</MenuItem>
          <MenuItem $w={45}>绘图(D)</MenuItem>
          <MenuItem $w={47}>修改(M)</MenuItem>
          <MenuItem $w={56}>钢筋量(Q)</MenuItem>
          <MenuItem $w={44}>视图(V)</MenuItem>
          <MenuItem $w={44}>工具(T)</MenuItem>
          <MenuItem $w={53}>云应用(Y)</MenuItem>
          <MenuItem $w={61}>BIM应用(I)</MenuItem>
          <MenuItem $w={65}>在线服务(S)</MenuItem>
          <MenuItem $w={44}>帮助(H)</MenuItem>
          <MenuItem $w={55}>版本号(B)</MenuItem>
          <MenuItem $w={75}><I n="android" />新建变更<Caret /></MenuItem>
          <MenuItem $w={49}><I n="assistant" />广小二</MenuItem>
          <HelpTab>如何清除CAD图？</HelpTab>
          <MenuItem $w={103}><I n="avatar" />13907298339<Caret /></MenuItem>
          <MenuItem $w={49}>造价豆:0</MenuItem>
          <Bell size={15} color="#3b8be0" fill="#3b8be0" />
        </MenuBar>

        <ToolRow $h={26}>
          <Tool $w={6} />
          <Tools items={mainTools} />
          <ModeBox>
            <svg width="12" height="12" viewBox="0 0 12 12"><rect x=".5" y=".5" width="11" height="11" fill="#eee" stroke="#ccc" /></svg>
            二维
            <Caret />
          </ModeBox>
          <Tools items={viewTools} />
        </ToolRow>

        <Workspace>
          <NavPanel>
            <NavTitle>
              模块导航栏
              <NavTitleTools>
                <svg width="9" height="9" viewBox="0 0 10 10"><path d="M3 1h4v4l1 1H2l1-1zM5 6v4" fill="#444" stroke="#444" /></svg>
                <svg width="9" height="9" viewBox="0 0 10 10"><path d="M1 1l8 8M9 1L1 9" stroke="#666" /></svg>
              </NavTitleTools>
            </NavTitle>
            <NavButton>工程设置</NavButton>
            <NavButton>绘图输入</NavButton>
            <TreeBox>
              <TreeTools>
                <svg width="16" height="14" viewBox="0 0 16 14"><path d="M4 3h5M6.5 1v5" stroke="#222" strokeWidth="2" /><path d="M8 9h6M11 6v6" stroke="#2a8a6a" strokeWidth="2" /></svg>
                <svg width="16" height="14" viewBox="0 0 16 14"><path d="M1 4h7" stroke="#222" strokeWidth="2" /><path d="M7 9h8" stroke="#2a8a6a" strokeWidth="2" /></svg>
              </TreeTools>
              <TreeScrollArea>
                <TreeBody>
                  {navRows.map((r) =>
                    r.folder ? (
                      <NavRow key={r.label}>
                        <Chevron $open={r.open} />
                        <I n="folder" />
                        <NavLabel>{r.label}</NavLabel>
                      </NavRow>
                    ) : (
                      <NavRow key={r.label} $leaf>
                        <Guide $w={26} />
                        <I n={r.icon as string} />
                        <NavLabel $sel={r.sel}>{r.label}</NavLabel>
                        {r.sel && (
                          <svg width="10" height="12" viewBox="0 0 10 12"><path d="M.5 1h9v10h-9zM3.5 1v10M6.5 1v10" fill="none" stroke="#4a8ad0" /></svg>
                        )}
                      </NavRow>
                    )
                  )}
                </TreeBody>
                <Scrollbar $w={14} $top={14} $bottom={14}>
                  <ChevronUp size={12} />
                  <ChevronDown size={12} />
                </Scrollbar>
              </TreeScrollArea>
            </TreeBox>
            <NavButton>单构件输入</NavButton>
            <NavButton>报表预览</NavButton>
          </NavPanel>

          <CenterColumn>
            <ToolRow $h={25}>
              <Tools items={compTools} />
              <RowInput $w={52}>第2层<Caret /></RowInput>
              <Tools items={compTools2} />
            </ToolRow>
            <ContentRow>
              <ListPanel>
                <SearchRow>
                  <SearchInput>搜索构件...</SearchInput>
                  <SearchBtn><Search size={13} strokeWidth={3} /></SearchBtn>
                </SearchRow>
                <ListBox>
                  <ListBody>
                    {zdyx.map((name) => (
                      <ListRow key={name}>
                        <Guide $w={9} />
                        <ListText $sel={name === "ZDYX-80"}>
                          <Gear />
                          {name}
                        </ListText>
                      </ListRow>
                    ))}
                  </ListBody>
                  <Scrollbar $w={14} $top={282} $bottom={16}>
                    <ChevronUp size={12} />
                    <ChevronDown size={12} />
                  </Scrollbar>
                </ListBox>
              </ListPanel>
              <PropsPanel>
                <PropsTabs>
                  <PropsTab>属性编辑</PropsTab>
                </PropsTabs>
                <PropsBody>
                  <Grid>
                    <GridRow $h={20}>
                      <GridNum />
                      <GridCell />
                    </GridRow>
                    {gridRows.map((r) => (
                      <GridRow key={r.n} $h={16.8}>
                        <GridNum $on={r.on}>{r.n}</GridNum>
                        <GridCell $on={r.on}>{r.t}</GridCell>
                      </GridRow>
                    ))}
                  </Grid>
                  <Scrollbar $w={14} $top={16} $bottom={14}>
                    <ChevronUp size={12} />
                    <ChevronDown size={12} />
                  </Scrollbar>
                </PropsBody>
              </PropsPanel>
            </ContentRow>
          </CenterColumn>
        </Workspace>

        <StatusBar>
          <StatusCell $w={129} />
          <StatusCell $w={67} $mono>层高:4.5m</StatusCell>
          <StatusCell $w={84} $mono>底标高:4.45m</StatusCell>
          <StatusCell $w={41} $mono>0</StatusCell>
          <StatusCell>名称在当前层当前构件类型下不允许重名</StatusCell>
          <StatusCell $w={60} $mono>66.2 FPS</StatusCell>
        </StatusBar>

        <Taskbar>
          <StartButton>
            <svg width="14" height="14" viewBox="0 0 14 14"><path d="M0 2l6-1v5.5H0zM7 .8L14 0v6.5H7zM0 7.5h6V13l-6-1zM7 7.5h7V14l-7-1z" fill="#fff" /></svg>
          </StartButton>
          <TaskSearch>
            <SearchRing />
            在这里输入你要搜索的内容
            <MicSlot><Mic size={15} color="#444" /></MicSlot>
          </TaskSearch>
          <TaskIcon $w={44}>
            <svg width="16" height="14" viewBox="0 0 16 14"><path d="M1 1h10M1 13h10M2 4h8v6H2zM13 1v12M15 3v8" fill="none" stroke="#ddd" /></svg>
          </TaskIcon>
          <TaskIcon $w={44}>
            <svg width="20" height="20" viewBox="0 0 20 20"><path d="M10 10C5 10 2 8 3 4s6-3 7 6zM10 10c0-5 2-8 6-7s3 6-6 7zM10 10c5 0 8 2 7 6s-6 3-7-6zM10 10c0 5-2 8-6 7s-3-6 6-7z" fill="#f0f0f0" /></svg>
          </TaskIcon>
          <TaskIcon $w={48}><TaskLetter $c="#f0f0f0">e</TaskLetter></TaskIcon>
          <TaskIcon $w={44}>
            <svg width="24" height="22" viewBox="0 0 24 22">
              <path d="M10 19a7 7 0 1 1 6-10M10 15a3 3 0 1 1 3-4" fill="none" stroke="#bbb" strokeWidth="1.5" />
              <path d="M15 11c0-4 1-7 3.5-7S22 7 22 11l1 1H14z" fill="#e8a020" />
            </svg>
          </TaskIcon>
          <TaskIcon $w={38}><TaskLetter $c="#0a78d8">e</TaskLetter></TaskIcon>
          <TaskIcon $w={30}>
            <svg width="24" height="24" viewBox="0 0 24 24"><text x="4" y="20" fontSize="24" fontWeight="bold" fill="#2a8ae0" fontFamily="Liberation Sans">e</text><ellipse cx="12" cy="13" rx="11" ry="5" fill="none" stroke="#f0b020" strokeWidth="1.5" transform="rotate(-30 12 13)" /></svg>
          </TaskIcon>
          <TaskIcon $w={36}>
            <svg width="20" height="18" viewBox="0 0 20 18"><path d="M1 1h7l1 2h10v14H1z" fill="#f3d36b" /><path d="M6 11h8v6H6z" fill="#4aa0d8" /></svg>
          </TaskIcon>
          <TaskIcon $w={32} $line>
            <svg width="20" height="20" viewBox="0 0 20 20"><circle cx="10" cy="10" r="9" fill="#7ec83c" stroke="#cfe8b0" /><path d="M5 8h10M5 12h10" stroke="#fff" strokeWidth="2" /></svg>
          </TaskIcon>
          <TaskIcon $w={36}>
            <svg width="22" height="16" viewBox="0 0 22 16"><rect width="22" height="16" fill="#f4f4f4" /><path d="M0 0l11 8L22 0M6 14L20 6l-4 9z" fill="#111" /></svg>
          </TaskIcon>
          <TaskIcon $w={30} $line><TaskLetter $c="#1a9ae8" $size={26}>G</TaskLetter></TaskIcon>
          <TaskIcon $w={36} $on $line><AppLogo s={20} /></TaskIcon>
          <TaskIcon $w={32} $line>
            <svg width="20" height="20" viewBox="0 0 20 20"><rect width="20" height="20" rx="3" fill="#1f63b8" /><rect x="4" y="5" width="12" height="10" fill="#cfe0f4" /><path d="M6 8h8M6 11h6" stroke="#d88a20" /></svg>
          </TaskIcon>
          <TaskScroll>
            <ChevronUp size={12} />
            <ChevronDown size={12} />
          </TaskScroll>
          <TaskIcon $w={50}><Users size={14} color="#ddd" /></TaskIcon>
          <CpuBlock $w={64}>
            <span>43%</span>
            <span>CPU使用</span>
          </CpuBlock>
          <TaskIcon $w={22}><ChevronUp size={15} color="#ddd" /></TaskIcon>
          <TaskIcon $w={22}><BatteryMedium size={15} color="#ddd" /></TaskIcon>
          <TaskIcon $w={22}><Wifi size={14} color="#bbb" /></TaskIcon>
          <TaskIcon $w={16}><Volume1 size={14} color="#ddd" /></TaskIcon>
          <TaskIcon $w={34}><Keyboard size={18} color="#ddd" strokeWidth={1.2} /></TaskIcon>
          <TaskIcon $w={14}><ImeChar>中</ImeChar></TaskIcon>
          <TaskIcon $w={32}><SmallLogo>S</SmallLogo></TaskIcon>
          <CpuBlock $w={62}>
            <span>8:34</span>
            <span>2018/10/17</span>
          </CpuBlock>
          <TaskIcon $w={38}><MessageSquare size={15} color="#eee" /></TaskIcon>
        </Taskbar>

        <SectionDialog>
          <SectionTitle>截面编辑</SectionTitle>
          <SectionBody>
            <SectionTabs>
              <SectionTab $w={36}>截面</SectionTab>
              <SectionTab $w={39} $on>配筋</SectionTab>
            </SectionTabs>
            <SectionPanel>
              <ToolRow $h={25} $bg="#f0f0f0">
                <Tools items={barRow1} />
                <RowInput $w={71}>C8@150<Caret /></RowInput>
                <Tools items={barRow1b} />
              </ToolRow>
              <ToolRow $h={22} $bg="#f0f0f0">
                <Tools items={barRow2} />
              </ToolRow>
              <Canvas>
                <SectionDrawing />
              </Canvas>
              <ToolRow $h={25} $bg="#f5f5f5">
                <Tools items={barRow3} />
              </ToolRow>
            </SectionPanel>
            <SectionStatus>
              <StatusCell $w={86}>(X: 22 Y: 12)</StatusCell>
              <StatusCell>请选择需要偏移的参考线，支持多选、框选，右键完成选择，按ESC键取消</StatusCell>
            </SectionStatus>
          </SectionBody>
        </SectionDialog>

        <OffsetDialog>
          <OffsetTitle>
            <AppLogo s={14} />
            设置偏移值
            <OffsetClose><XIcon size={14} /></OffsetClose>
          </OffsetTitle>
          <OffsetRow>
            设置偏移值：
            <OffsetInput>
              <Selected>15+d1/2</Selected>
              <ChevronDown size={12} color="#666" />
            </OffsetInput>
          </OffsetRow>
          <OffsetHint>提示：可输入数值、d1(线筋直径)、dp(点筋直径)、bhc(保护层)等组成的表达式</OffsetHint>
          <OffsetButtons>
            <OffsetBtn>确定</OffsetBtn>
            <OffsetBtn>取消</OffsetBtn>
          </OffsetButtons>
        </OffsetDialog>
      </Window>

      <BottomBand>
        <BottomPart $w={39} $bg="#404040" />
        <BottomPart $w={441} $bg="#4a4a4a" />
        <BottomPart $w={428} $bg="#000" />
        <BottomPart $w={404} $bg="#404040" />
      </BottomBand>

      <GreenBadge>75</GreenBadge>
      <SogouBar>
        <span>中</span>
        <span>°,</span>
        <Smile size={16} />
        <Mic size={16} />
        <Keyboard size={16} />
        <User size={16} color="#a9bccc" />
        <Shirt size={16} fill="#1a7ad4" />
        <Wrench size={16} />
      </SogouBar>
      <SogouLogo>S</SogouLogo>

      <Markup width="1312" height="707" viewBox="0 0 1312 707">
        <ellipse cx="645" cy="193" rx="71" ry="33" fill="none" stroke="#ee0a0a" strokeWidth="7" transform="rotate(6 645 193)" />
        <ellipse cx="229" cy="289" rx="67" ry="36" fill="none" stroke="#ee0a0a" strokeWidth="7" transform="rotate(3 229 289)" />
        <polygon points="721,212 731,205 731,210 965,217 731,217 731,220" fill="#18a818" />
        <polygon points="218,346 221,356 217,356 178,518 212,354 209,353" fill="#18a818" />
        <polygon points="955,420 964,430 960,431 995,553 952,433 948,436" fill="#18a818" />
      </Markup>

      <Note $x={63} $y={532}>老师，您这个是什么意思？</Note>
      <Note $x={795} $y={612}>
        老师，这个图纸中没有这个弯钩啊，用删除
        <br />
        么？
      </Note>

      <CloseCircle>
        <XIcon size={22} strokeWidth={1.8} />
      </CloseCircle>
    </Page>
  </>
);

export default App;
